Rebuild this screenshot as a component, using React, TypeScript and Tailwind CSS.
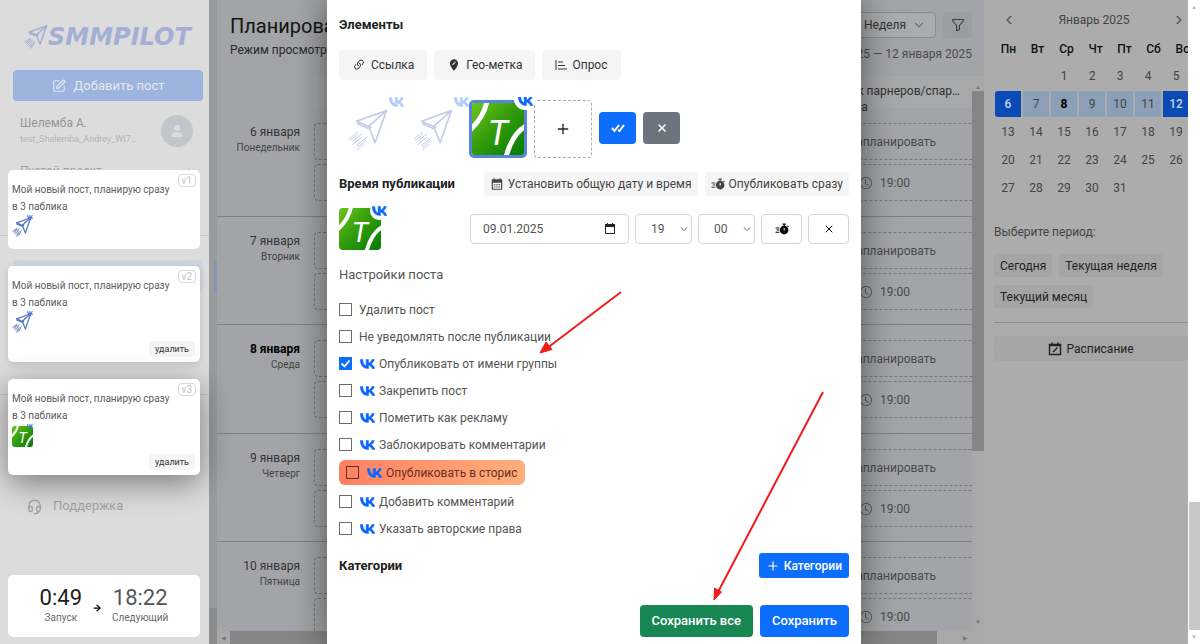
import { useState } from "react";
import {
  BsChevronDown,
  BsChevronLeft,
  BsChevronRight,
  BsClock,
  BsFunnel,
  BsLink45Deg,
  BsPersonFill,
} from "react-icons/bs";
import { MdCalendarMonth, MdEditLocation } from "react-icons/md";
import { TbHeadset } from "react-icons/tb";
import { ArrowRight, Plus, SquarePen, X } from "lucide-react";

const DAYS = [
  { date: "6 января", name: "Понедельник" },
  { date: "7 января", name: "Вторник" },
  { date: "8 января", name: "Среда", today: true },
  { date: "9 января", name: "Четверг" },
  { date: "10 января", name: "Пятница" },
];

const WEEKDAYS = ["Пн", "Вт", "Ср", "Чт", "Пт", "Сб", "Вс"];

const SETTINGS = [
  { id: "delete", label: "Удалить пост" },
  { id: "silent", label: "Не уведомлять после публикации" },
  { id: "group", label: "Опубликовать от имени группы", vk: true },
  { id: "pin", label: "Закрепить пост", vk: true },
  { id: "ads", label: "Пометить как рекламу", vk: true },
  { id: "close", label: "Заблокировать комментарии", vk: true },
  { id: "stories", label: "Опубликовать в сторис", vk: true, accent: true },
  { id: "comment", label: "Добавить комментарий", vk: true },
  { id: "copyright", label: "Указать авторские права", vk: true },
];

function VkIcon({ className = "" }: { className?: string }) {
  return (
    <svg viewBox="3.700 7 16.600 10.600" className={className} fill="currentColor" stroke="currentColor" strokeWidth="0.600" strokeLinejoin="round" aria-hidden="true">
      <path d="M12.77 17.29c-5.47 0-8.59-3.75-8.72-9.99h2.74c.09 4.58 2.11 6.52 3.71 6.92V7.3h2.58v3.95c1.58-.17 3.24-1.97 3.8-3.95h2.58c-.43 2.44-2.23 4.24-3.51 4.98 1.28.6 3.33 2.17 4.11 5.01h-2.84c-.61-1.9-2.13-3.37-4.14-3.57v3.57z" />
    </svg>
  );
}

function PlaneIcon({ className = "", bold = false }: { className?: string; bold?: boolean }) {
  return (
    <svg
      viewBox="0 0 124 130"
      className={className}
      fill="none"
      stroke="currentColor"
      strokeWidth={bold ? 8 : 5}
      strokeLinejoin="round"
      strokeLinecap="round"
      aria-hidden="true"
    >
      <path d="M119 5 26 38l38 16 20 50z" />
      <path d="M119 5 64 54M30 46l32 14 10-4" />
      <path d="m3 92 27-20M7 97l24-18M16 99l27-22M14 110l28-22M27 112l30-24M29 118l26-21M28 127l22-18" strokeWidth={bold ? 5 : 3} />
    </svg>
  );
}

function BrandTile({ className = "" }: { className?: string }) {
  return (
    <svg viewBox="0 0 52 52" className={className} aria-hidden="true">
      <defs>
        <linearGradient id="brand" x1="0" y1="0" x2="1" y2="1">
          <stop offset="0" stopColor="#6cc518" />
          <stop offset="0.5" stopColor="#2f9a0c" />
          <stop offset="1" stopColor="#067a04" />
        </linearGradient>
      </defs>
      <rect width="52" height="52" fill="url(#brand)" />
      <path d="M15-2Q12 14-2 27M54 23Q40 31 34 54" fill="none" stroke="#fff" strokeWidth="5" />
      <text x="26" y="42" textAnchor="middle" fill="#fff" fontSize="35" fontStyle="italic" fontFamily="Roboto, sans-serif">
        T
      </text>
    </svg>
  );
}

function FastTimerIcon({ className = "" }: { className?: string }) {
  return (
    <svg viewBox="0 0 26 22" className={className} fill="none" stroke="currentColor" strokeWidth="2" aria-hidden="true">
      <circle cx="17" cy="13" r="8" fill="currentColor" stroke="none" />
      <path d="M14 2h6M17 2v4M23 5l2 2M1 9h7M3 13h5M1 17h7" />
      <path d="M17 9v5" stroke="#fff" />
    </svg>
  );
}

function PollIcon() {
  return (
    <svg viewBox="0 0 12 12" className="h-3 w-3" fill="none" stroke="currentColor" aria-hidden="true">
      <path d="M1 1v10M3 3h5M3 6.500h7M3 10h9" />
    </svg>
  );
}

function ScheduleIcon() {
  return (
    <svg viewBox="0 0 14 14" className="h-3.5 w-3.5" fill="none" stroke="currentColor" strokeWidth="1.400" aria-hidden="true">
      <path d="M1.500 2.500h11v10h-11zM1.500 3.500h11M4 .5v2M10 .5v2M5 10l4.500-4.500" />
    </svg>
  );
}

function DraftCard({ version, className = "", removable, children }: { version: string; className?: string; removable?: boolean; children: React.ReactNode }) {
  return (
    <article className={`relative rounded-[5px] bg-white px-1 pt-[11px] ${removable ? "h-24" : "h-[79px]"} ${className}`}>
      <span className="absolute right-1 top-1 flex h-[13px] items-center rounded border border-[#d8d8d8] px-[3px] text-[10px] leading-none text-[#c4c4c4]">
        {version}
      </span>
      <p className="text-[10px] leading-[17px] text-[#5c5c5c]">
        Мой новый пост, планирую сразу
        <br />в 3 паблика
      </p>
      <div className="relative mt-[2px] h-[21px] w-[21px]">
        {children}
        <VkIcon className="absolute -top-[2px] right-0 h-1 w-1.5 text-[#3d78e8]" />
      </div>
      {removable && (
        <button type="button" className="absolute bottom-[5px] right-[5px] h-4 rounded-[4px] bg-[#f5f5f5] px-1.5 text-[9px] leading-none text-[#333]">
          удалить
        </button>
      )}
    </article>
  );
}

function Sidebar() {
  return (
    <aside className="relative w-[209px] shrink-0 bg-[#dcdcdc]">
      <div className="flex h-[70px] items-center pl-6 pt-1">
        <PlaneIcon bold className="h-6 w-6 text-[#a3afd4]" />
        <span className="font-['DejaVu_Sans',sans-serif] text-2xl font-bold italic leading-none text-[#a3afd4]">SMMPILOT</span>
      </div>
      <div className="pl-[13px] pr-1.5">
        <button type="button" className="flex h-[31px] w-full items-center justify-center gap-2 rounded-[4px] bg-[#9db5de] text-[13px] text-[#e4e8ef]">
          <SquarePen className="h-3.5 w-3.5" />
          Добавить пост
        </button>
        <div className="mt-[14px] flex items-center justify-between pl-[7px] pr-[10px]">
          <div>
            <p className="text-xs leading-4 text-[#969696]">Шелемба А.</p>
            <p className="text-[9px] leading-4 text-[#b4b4b4]">test_Shelemba_Andrey_WI7…</p>
          </div>
          <span className="flex h-8 w-8 items-center justify-center rounded-full bg-[#c2c6ca]">
            <BsPersonFill className="h-4 w-4 text-[#dcdcdc]" />
          </span>
        </div>
        <div className="mt-4 flex items-center justify-between pl-[7px] pr-2.5 text-xs text-[#a4a4a4]">
          Пустой проект
          <BsChevronDown className="h-2 w-2 rotate-180" />
        </div>
      </div>
      <hr className="mt-14 border-[#c8c8c8]" />
      <div className="ml-[13px] mr-1.5 mt-6 h-8 rounded bg-[#cfd3db]" />
      <hr className="mt-[102px] border-[#c8c8c8]" />
      <a href="#support" className="mt-[101px] flex items-center gap-2.5 pl-[26px] text-[13px] leading-5 text-[#a4a4a4]">
        <TbHeadset className="h-[17px] w-[17px]" />
        Поддержка
      </a>

      {/* Drafts lie over the menu */}
      <div className="absolute left-2 right-[9px] top-[170px] flex flex-col gap-[17px]">
        <DraftCard version="v1">
          <PlaneIcon bold className="h-5 w-5 text-[#5673bd]" />
        </DraftCard>
        <DraftCard version="v2" removable className="shadow-[0_2px_8px_rgba(0,0,0,0.12)]">
          <PlaneIcon bold className="h-5 w-5 text-[#5673bd]" />
        </DraftCard>
        <DraftCard version="v3" removable className="shadow-[0_8px_32px_rgba(0,0,0,0.45)]">
          <BrandTile className="h-[21px] w-[21px] rounded-[3px]" />
        </DraftCard>
      </div>

      <div className="absolute bottom-[7px] left-2 right-[9px] flex h-[62px] items-center justify-center gap-2.5 rounded-[5px] bg-white text-center">
        <div>
          <p className="text-[22px] leading-6 text-[#1c1c1c]">0:49</p>
          <p className="text-[10px] leading-4 text-[#6a6a6a]">Запуск</p>
        </div>
        <ArrowRight className="mt-1 h-2.5 w-2.5 text-black" strokeWidth={3} />
        <div>
          <p className="text-[22px] leading-6 text-[#555]">18:22</p>
          <p className="text-[10px] leading-4 text-[#6a6a6a]">Следующий</p>
        </div>
      </div>
    </aside>
  );
}

function Planner() {
  return (
    <main className="flex min-w-0 flex-1 flex-col bg-[#a2a4a7] text-[#4a4b4c]">
      <header className="flex h-[76px] shrink-0 justify-between pl-[13px] pr-3 pt-3">
        <div>
          <h1 className="text-xl leading-7 text-[#141414]">Планирование</h1>
          <p className="mt-[2px] text-xs leading-4 text-[#2a2a2a]">Режим просмотра</p>
        </div>
        <div className="flex flex-col items-end">
          <div className="flex gap-[7px]">
            <div className="relative">
              <select aria-label="Период" className="h-[26px] w-24 appearance-none rounded-[4px] border border-[#8b8c8e] bg-[#a9abad] pl-[23px] text-xs text-[#333]">
                <option>Неделя</option>
              </select>
              <BsChevronDown className="pointer-events-none absolute right-3 top-2 h-2.5 w-2.5 text-[#222]" />
            </div>
            <button type="button" aria-label="Фильтр" className="flex h-[26px] w-[29px] items-center justify-center rounded-[3px] bg-[#9b9da0] text-[#222]">
              <BsFunnel className="h-3.5 w-3.5" />
            </button>
          </div>
          <p className="mt-2 text-xs leading-4 text-[#4c4c4c]">6 января 2025 — 12 января 2025</p>
        </div>
      </header>

      <div className="flex min-h-0 flex-1">
        <div className="min-w-0 flex-1 overflow-hidden">
          <div className="flex h-8 pl-[97px]">
            <div className="flex flex-1 justify-end bg-[#a6a8aa] pr-3 pt-[7px] text-xs leading-4 text-[#333]">
              <p>
                к парнеров/спар…
                <br />
                <span className="pl-1">а</span>
              </p>
            </div>
          </div>
          {DAYS.map((day) => (
            <section key={day.date} className="flex h-[109px] border-b border-[#808183] odd:h-[108px]">
              <div className={`w-[83px] pt-4 text-right ${day.today ? "font-bold text-black" : "text-[#333]"}`}>
                <p className="text-xs leading-4">{day.date}</p>
                <p className="text-[10px] font-normal leading-4 text-[#444]">{day.name}</p>
              </div>
              <div className="ml-[14px] flex flex-1 flex-col gap-1 pt-[15px] text-xs">
                <div className="flex h-[37px] items-center justify-end rounded-l border border-r-0 border-dashed border-[#77787a]">
                  <span className="w-[123px]">Запланировать</span>
                </div>
                <div className="flex h-[37px] items-center justify-end rounded-l border border-r-0 border-dashed border-[#77787a]">
                  <span className="flex w-28 items-center gap-2">
                    <BsClock className="h-3 w-3" />
                    19:00
                  </span>
                </div>
              </div>
            </section>
          ))}
        </div>
        <div className="flex w-3 shrink-0 flex-col items-center bg-[#a8a8a8] pb-[5px] pt-[6px] text-[6px] leading-[9px] text-[#777]">
          ▲
          <div className="h-[360px] w-full bg-[#858585]" />
          <span className="mt-auto">▼</span>
        </div>
      </div>
      <div className="flex h-[13px] shrink-0 items-center justify-between bg-[#a8a8a8] pl-1 pr-4 text-[6px] leading-none text-[#777]">
        ◀
        <div className="mx-1 h-full w-[707px] bg-[#858585]" />
        <span className="ml-auto">▶</span>
      </div>
    </main>
  );
}

function dayClass(day: number) {
  if (day === 6) return "rounded-l-[3px] bg-[#0a4ab5] font-medium text-[#c8d4e8]";
  if (day === 12) return "rounded-r-[3px] bg-[#0a4ab5] font-medium text-[#c8d4e8]";
  if (day === 8) return "bg-[#8ba0b7] font-bold text-black";
  if (day > 6 && day < 12) return "bg-[#8ba0b7]";
  return "";
}

function CalendarPanel() {
  return (
    <aside className="w-[204px] shrink-0 overflow-hidden bg-[#acacac] pl-[10px] text-[#444]">
      <div className="flex h-10 items-center justify-between px-2.5 pr-1 text-xs">
        <button type="button" aria-label="Предыдущий месяц">
          <BsChevronLeft className="h-2.5 w-2.5" strokeWidth={1} />
        </button>
        Январь 2025
        <button type="button" aria-label="Следующий месяц">
          <BsChevronRight className="h-2.5 w-2.5" strokeWidth={1} />
        </button>
      </div>
      <div className="grid grid-cols-[repeat(7,29px)] text-center text-xs font-medium leading-[18px] text-[#111]">
        {WEEKDAYS.map((name) => (
          <span key={name}>{name}</span>
        ))}
      </div>
      <div className="mt-[5px] grid grid-cols-[repeat(7,26px)] gap-[2px] pl-px text-xs">
        <span className="col-span-2" />
        {Array.from({ length: 31 }, (_, i) => i + 1).map((day) => (
          <button key={day} type="button" className={`h-[26px] ${dayClass(day)}`}>
            {day}
          </button>
        ))}
      </div>
      <p className="mt-[23px] text-xs leading-4">Выберите период:</p>
      <div className="mt-[14px] flex flex-wrap gap-x-[7px] gap-y-2 text-xs text-[#222]">
        {["Сегодня", "Текущая неделя", "Текущий месяц"].map((label) => (
          <button key={label} type="button" className="h-[23px] rounded-[3px] bg-[#a5a5a5] px-1.5">
            {label}
          </button>
        ))}
      </div>
      <hr className="mt-[14px] border-[#8c8c8c]" />
      <button type="button" className="mt-[13px] flex h-[25px] w-full items-center justify-center gap-1 rounded-[3px] bg-[#a5a5a5] text-xs text-[#222]">
        <ScheduleIcon />
        Расписание
      </button>
    </aside>
  );
}

function TimeSelect({ label, value }: { label: string; value: string }) {
  return (
    <div className="relative">
      <select
        aria-label={label}
        defaultValue={value}
        className="h-[30px] w-[57px] appearance-none rounded-[4px] border border-[#d3d6d9] bg-white pl-[15px] text-xs text-[#555]"
      >
        <option>{value}</option>
      </select>
      <BsChevronDown className="pointer-events-none absolute right-1 top-[11px] h-2 w-2 text-[#333]" />
    </div>
  );
}

function PostModal() {
  const [checked, setChecked] = useState<string[]>(["group"]);

  const toggle = (id: string) => {
    setChecked(checked.includes(id) ? checked.filter((c) => c !== id) : [...checked, id]);
  };

  const elementButton = "flex h-[30px] items-center gap-[5px] rounded-[4px] bg-[#f5f5f5] px-[13px] text-xs text-[#333]";
  const timeButton = "flex h-6 items-center gap-1 whitespace-nowrap rounded-[3px] bg-[#f5f5f5] px-1.5 text-xs text-[#444]";
  const iconButton = "flex h-[30px] w-[41px] items-center justify-center rounded-[4px] border border-[#d3d6d9] text-black";

  return (
    <div className="absolute inset-y-0 left-0 right-3 flex justify-center">
      <div role="dialog" aria-label="Новый пост" className="h-full w-[534px] bg-white px-3 pt-4 text-[#444] shadow-[0_0_32px_rgba(0,0,0,0.5)]">
        <h2 className="text-[13px] font-bold leading-[18px] text-[#222]">Элементы</h2>
        <div className="mt-4 flex gap-[7px]">
          <button type="button" className={elementButton}>
            <BsLink45Deg className="h-3.5 w-3.5" />
            Ссылка
          </button>
          <button type="button" className={elementButton}>
            <MdEditLocation className="h-3.5 w-3.5" />
            Гео-метка
          </button>
          <button type="button" className={elementButton}>
            <PollIcon />
            Опрос
          </button>
        </div>

        <div className="mt-[17px] flex h-[61px] items-center gap-[7px] overflow-hidden pt-px">
          {[1, 2].map((n) => (
            <div key={n} className="relative flex h-[60px] w-[58px] items-center justify-center pt-1 opacity-40">
              <PlaneIcon className="h-[42px] w-[42px] text-[#6b80c4]" />
              <VkIcon className="absolute -right-[7px] -top-px h-2.5 w-[15px] text-[#3d86f5]" />
            </div>
          ))}
          <div className="relative h-[60px] w-[58px] pt-[2px]">
            <BrandTile className="h-[58px] w-[58px] rounded-[5px] border-[3px] border-[#5585dd]" />
            <span className="absolute -right-[9px] -top-[10px] flex h-[22px] w-[22px] items-end justify-center rounded-full bg-white pb-1 text-[#0a66ff]">
              <VkIcon className="h-2.5 w-[15px]" />
            </span>
          </div>
          <button type="button" aria-label="Добавить" className="mt-[2px] flex h-[58px] w-[58px] items-center justify-center rounded-[4px] border border-dashed border-[#aaa] text-[#222]">
            <Plus className="h-4 w-4" strokeWidth={2} />
          </button>
          <button type="button" aria-label="Выбрать все" className="flex h-8 w-[37px] items-center justify-center rounded-[4px] bg-[#0d6efd] text-white">
            <svg viewBox="0 0 14 10" className="h-2.5 w-3.5" fill="none" stroke="currentColor" strokeWidth="2" aria-hidden="true">
              <path d="m1 5 2.500 3L8 2M7 7l1.500 1L13 2" />
            </svg>
          </button>
          <button type="button" aria-label="Снять выбор" className="flex h-8 w-[37px] items-center justify-center rounded-[4px] bg-[#6c757d] text-white">
            <X className="h-3 w-3" strokeWidth={3} />
          </button>
        </div>

        <div className="mt-[14px] flex h-6 items-center gap-[7px]">
          <h2 className="mr-auto whitespace-nowrap text-[13px] font-bold text-[#222]">Время публикации</h2>
          <button type="button" className={timeButton}>
            <MdCalendarMonth className="h-3.5 w-3.5" />
            Установить общую дату и время
          </button>
          <button type="button" className={timeButton}>
            <FastTimerIcon className="h-3 w-3.5" />
            Опубликовать сразу
          </button>
        </div>

        <div className="mt-3 flex h-[42px] items-center gap-[6px]">
          <div className="relative mr-auto">
            <BrandTile className="h-[42px] w-[42px] rounded-[4px]" />
            <span className="absolute -right-[7px] -top-[6px] flex h-[18px] w-[18px] items-center justify-center rounded-full bg-white text-[#0a66ff]">
              <VkIcon className="h-2.5 w-[15px] shrink-0" />
            </span>
          </div>
          <div className="relative">
            <input
              type="text"
              aria-label="Дата публикации"
              defaultValue="09.01.2025"
              className="h-[30px] w-[159px] rounded-[4px] border border-[#d3d6d9] pl-3 text-xs text-[#555]"
            />
            <svg viewBox="0 0 10 11" className="pointer-events-none absolute right-[14px] top-[9px] h-[11px] w-2.5 text-[#222]" aria-hidden="true">
              <path d="M.5 2v8.500h9V2zM2.500 0v2M7.500 0v2" fill="none" stroke="currentColor" />
              <path d="M0 1h10v3H0z" fill="currentColor" />
            </svg>
          </div>
          <TimeSelect label="Часы" value="19" />
          <TimeSelect label="Минуты" value="00" />
          <button type="button" aria-label="Опубликовать сразу" className={iconButton}>
            <FastTimerIcon className="h-3 w-3.5" />
          </button>
          <button type="button" aria-label="Удалить" className={iconButton}>
            <X className="h-3 w-3" strokeWidth={2} />
          </button>
        </div>

        <h3 className="mt-4 text-[13px] leading-[18px] text-[#555]">Настройки поста</h3>
        <div className="mt-3 flex flex-col items-start">
          {SETTINGS.map(({ id, label, vk, accent }) => (
            <label
              key={id}
              className={`flex items-center text-xs ${
                accent
                  ? "mb-[3px] mt-[2px] h-[25px] rounded-md bg-linear-to-r from-[#fe8063] to-[#feaf7b] px-[7px] text-[#6b2f20]"
                  : "h-[27px] text-[#555]"
              }`}
            >
              <input
                type="checkbox"
                checked={checked.includes(id)}
                onChange={() => toggle(id)}
                className={`peer h-[13px] w-[13px] shrink-0 appearance-none border checked:border-[#0d6efd] checked:bg-[#0d6efd] ${
                  accent ? "border-[#6b2f20]" : "border-[#6d6d6d]"
                }`}
              />
              <svg viewBox="0 0 13 13" className="-ml-[13px] hidden h-[13px] w-[13px] shrink-0 peer-checked:block" aria-hidden="true">
                <path d="m2.500 6.500 3 3 5-6" fill="none" stroke="#fff" strokeWidth="1.800" />
              </svg>
              {vk && <VkIcon className="ml-2 h-2.5 w-[15px] text-[#0a66ff]" />}
              <span className={vk ? "ml-1" : "ml-[7px]"}>{label}</span>
            </label>
          ))}
        </div>

        <div className="mt-[11px] flex items-center justify-between">
          <h2 className="text-[13px] font-bold text-[#222]">Категории</h2>
          <button type="button" className="flex h-[25px] items-center gap-1 rounded-[3px] bg-[#0d6efd] px-[7px] text-xs font-medium text-white">
            <Plus className="h-3.5 w-3.5" strokeWidth={2} />
            Категории
          </button>
        </div>
        <div className="mt-[27px] flex justify-end gap-[7px] text-[13px] font-medium text-white">
          <button type="button" className="h-8 rounded-[4px] bg-[#198754] px-3">
            Сохранить все
          </button>
          <button type="button" className="h-8 rounded-[4px] bg-[#0d6efd] px-3">
            Сохранить
          </button>
        </div>
      </div>
    </div>
  );
}

export default function App() {
  return (
    <div className="relative flex h-screen overflow-hidden font-[Roboto,sans-serif]">
      <Sidebar />
      <div className="flex w-2 shrink-0 flex-col bg-[#9a9b9c] pt-[261px]">
        <div className="ml-auto h-8 w-[3px] bg-[#8393b3]" />
        <div className="mt-auto h-9 bg-[#8b8c8d]" />
      </div>
      <Planner />
      <CalendarPanel />
      <div className="flex w-3 shrink-0 flex-col items-center bg-white pt-1 text-[6px] leading-[6px] text-[#bbb]">
        ▲
        <div className="mt-auto h-32 w-[11px] bg-[#c8c8c8]" />
        <span className="py-[4px]">▼</span>
      </div>

      <PostModal />

      {/* Arrows pointing at the group option and the save button */}
      <svg className="pointer-events-none absolute left-0 top-0 h-[644px] w-[1200px]" fill="#ee1c1c" stroke="#ee1c1c" aria-hidden="true">
        <path d="M621 292 546 349M823 392 718 592" strokeWidth="2" />
        <path d="m540 353 12-3.500-6-7.500zM714 600l.5-12 7 4z" strokeWidth="1" />
      </svg>
    </div>
  );
}
